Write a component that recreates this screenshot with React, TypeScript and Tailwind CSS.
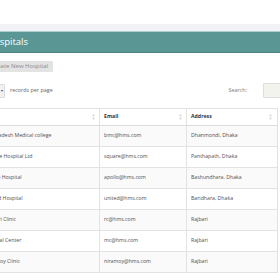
import React from "react";

const rows = [
  ["Bangladesh Medical college", "bmc@hms.com", "Dhanmondi, Dhaka"],
  ["Square Hospital Ltd", "square@hms.com", "Panthapath, Dhaka"],
  ["Apollo Hospital", "apollo@hms.com", "Bashundhara, Dhaka"],
  ["United Hospital", "united@hms.com", "Baridhara, Dhaka"],
  ["Rajbari Clinic", "rc@hms.com", "Rajbari"],
  ["Medical Center", "mc@hms.com", "Rajbari"],
  ["Niramoy Clinic", "niramoy@hms.com", "Rajbari"],
];

function SortIcon() {
  return (
    <svg width="3" height="6" viewBox="0 0 3 6" className="shrink-0">
      <path d="M1.5 0 L3 2.2 L0 2.2 Z" fill="#d6d6d6" />
      <path d="M1.5 6 L3 3.8 L0 3.8 Z" fill="#d6d6d6" />
    </svg>
  );
}

export default function App() {
  return (
    <div className="w-[280px] h-[280px] overflow-hidden bg-white font-['Open_Sans',sans-serif]">
      <div className="h-[24px] bg-white" />
      <div className="h-[7px] bg-[#f2f2f6]" />
      <div className="h-[22px] bg-[#5a9694] border-t border-t-[#a8d0ce] border-b border-b-[#4a8482] flex items-center">
        <span className="ml-[-13px] text-[9.5px] text-white leading-none whitespace-nowrap">Hospitals</span>
      </div>
      <div className="mt-[8px] ml-[-14px] flex">
        <div className="h-[11px] px-[5px] bg-[#e3e3e3] rounded-[1px] flex items-center text-[6px] text-[#8a8a8a] whitespace-nowrap">
          Create New Hospital
        </div>
      </div>
      <div className="mt-[11px] h-[15px] flex items-center justify-between">
        <div className="flex items-center">
          <div className="ml-[-17px] w-[22px] h-[14px] bg-[#f1f1f1] border border-[#dcdcdc] rounded-[1px] flex items-center justify-end pr-[1px] text-[5px] text-[#555]">
            <span className="mr-[3px]">10</span>
            <span className="text-[4px]">▾</span>
          </div>
          <span className="ml-[5px] text-[5.4px] text-[#666] whitespace-nowrap">records per page</span>
        </div>
        <div className="flex items-center">
          <span className="text-[5.4px] text-[#777]">Search:</span>
          <div className="ml-[16px] mr-[-23px] w-[40px] h-[15px] bg-[#f3f3ee] border border-[#dedede] rounded-[1px]" />
        </div>
      </div>
      <div className="mt-[10px] ml-[-20px] w-[298px] border-t border-l border-r border-[#e2e2e2] text-[5.2px]">
        <div className="grid grid-cols-[119px_87px_1fr] h-[17px] border-b border-[#dcdcdc] font-bold text-[#333]">
          <div className="flex items-center justify-between pl-[1px] pr-[4px] border-r border-[#e2e2e2]">
            <span>Name</span>
            <SortIcon />
          </div>
          <div className="flex items-center justify-between px-[4px] border-r border-[#e2e2e2]">
            <span>Email</span>
            <SortIcon />
          </div>
          <div className="flex items-center justify-between pl-[4px] pr-[5px]">
            <span>Address</span>
            <SortIcon />
          </div>
        </div>
        {rows.map((r, i) => (
          <div
            key={i}
            className={
              "grid grid-cols-[119px_87px_1fr] h-[21px] border-b border-[#e2e2e2] text-[#505050] " +
              (i % 2 === 0 ? "bg-[#fafafa]" : "bg-white")
            }
          >
            <div className="flex items-center px-[4px] border-r border-[#e2e2e2] whitespace-nowrap">{r[0]}</div>
            <div className="flex items-center px-[4px] border-r border-[#e2e2e2] whitespace-nowrap overflow-hidden">{r[1]}</div>
            <div className="flex items-center px-[4px] whitespace-nowrap">{r[2]}</div>
          </div>
        ))}
      </div>
    </div>
  );
}
